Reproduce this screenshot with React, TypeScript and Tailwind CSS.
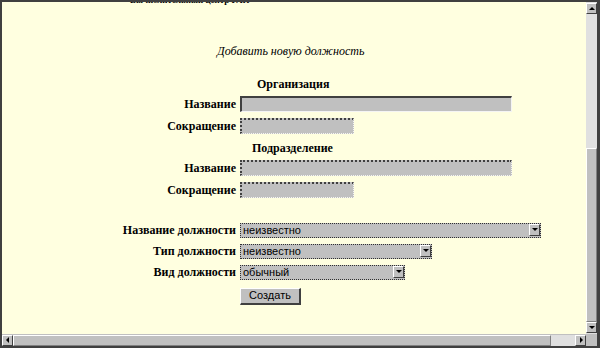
import React from "react";

const serif = { fontFamily: '"Liberation Serif", "Times New Roman", serif' };
const sans = { fontFamily: '"Liberation Sans", Arial, sans-serif' };

const Tri = ({ dir }: { dir: "up" | "down" | "left" | "right" }) => {
  const pts = {
    up: "1,5 4,2 7,5",
    down: "1,2 4,5 7,2",
    left: "5,1 2,4 5,7",
    right: "3,1 6,4 3,7",
  }[dir];
  return (
    <svg width="8" height="8" viewBox="0 0 8 8">
      <polygon points={pts} fill="#000" />
    </svg>
  );
};

const ArrowBtn = ({ dir }: { dir: "up" | "down" | "left" | "right" }) => (
  <div className="w-[11px] h-[11px] bg-[#c0c0c0] border-t border-l border-white border-r border-b border-r-[#404040] border-b-[#404040] flex items-center justify-center shrink-0">
    <Tri dir={dir} />
  </div>
);

const Field = ({ w, solid }: { w: number; solid?: boolean }) => (
  <div
    className={
      "ml-[4px] h-[16px] bg-[#c0c0c0] border-t-2 border-l-2 border-t-[#404040] border-l-[#404040] border-b border-r border-b-[#f4f4f4] border-r-[#f4f4f4] " +
      (solid ? "" : "border-dotted")
    }
    style={{ width: w }}
  />
);

const Select = ({ w, value }: { w: number; value: string }) => (
  <div
    className="ml-[4px] h-[15px] bg-[#c0c0c0] border border-dotted border-[#303030] flex items-center"
    style={{ width: w }}
  >
    <span className="flex-1 pl-[2px] text-[11px] leading-[13px] text-black" style={sans}>
      {value}
    </span>
    <div className="w-[11px] h-[12px] bg-[#c0c0c0] border-t border-l border-white border-r border-b border-r-[#404040] border-b-[#404040] flex items-center justify-center">
      <Tri dir="down" />
    </div>
  </div>
);

const Row = ({ label, children, mt }: { label: string; children: React.ReactNode; mt: string }) => (
  <div className={"flex items-center " + mt}>
    <div className="w-[234px] text-right text-[12px] font-bold leading-[16px] text-black" style={serif}>
      {label}
    </div>
    {children}
  </div>
);

export default function App() {
  return (
    <div className="w-[600px] h-[348px] flex flex-col bg-[#c0c0c0] border-t-2 border-l-2 border-r-[3px] border-b-2 border-[#404040] overflow-hidden">
      <div className="flex flex-1 min-h-0">
        <div className="flex-1 bg-[#ffffe0] overflow-hidden" style={serif}>
          <div className="h-[41px] overflow-hidden">
            <div className="-mt-[10px] pl-[128px] text-[9px] font-bold leading-[16px] text-black">
              Вычислительный центр РАН
            </div>
          </div>
          <div className="h-[16px] pl-[215px] text-[12px] italic leading-[16px] text-black">
            Добавить новую должность
          </div>
          <div className="mt-[17px] h-[16px] pl-[255px] text-[12px] font-bold leading-[16px] text-black">
            Организация
          </div>
          <Row label="Название" mt="mt-[4px]">
            <Field w={272} solid />
          </Row>
          <Row label="Сокращение" mt="mt-[6px]">
            <Field w={114} />
          </Row>
          <div className="mt-[6px] h-[16px] pl-[250px] text-[12px] font-bold leading-[16px] text-black">
            Подразделение
          </div>
          <Row label="Название" mt="mt-[4px]">
            <Field w={272} />
          </Row>
          <Row label="Сокращение" mt="mt-[6px]">
            <Field w={114} />
          </Row>
          <Row label="Название должности" mt="mt-[24px]">
            <Select w={301} value="неизвестно" />
          </Row>
          <Row label="Тип должности" mt="mt-[5px]">
            <Select w={192} value="неизвестно" />
          </Row>
          <Row label="Вид должности" mt="mt-[5px]">
            <Select w={165} value="обычный" />
          </Row>
          <div className="mt-[2px] pl-[238px]">
            <button
              className="w-[61px] h-[17px] bg-[#c0c0c0] border-t border-l border-white border-r-2 border-b-2 border-r-[#404040] border-b-[#404040] text-[11px] leading-[13px] text-black"
              style={sans}
            >
              Создать
            </button>
          </div>
        </div>
        <div className="w-[11px] flex flex-col pt-[1px] bg-[#e0e0e0]">
          <ArrowBtn dir="up" />
          <div className="h-[134px] bg-[#e0e0e0]" />
          <div className="flex-1 bg-[#c0c0c0] border-t border-l border-white border-r border-b border-r-[#808080] border-b-[#808080]" />
          <ArrowBtn dir="down" />
          <div className="h-[1px]" />
        </div>
      </div>
      <div className="h-[12px] flex bg-[#c0c0c0]">
        <div className="flex-1 flex items-center">
          <ArrowBtn dir="left" />
          <div className="flex-1 h-[11px] bg-[#c0c0c0] border-t border-l border-white border-r border-b border-r-[#808080] border-b-[#808080]" />
          <div className="w-[24px] h-[11px] bg-[#e0e0e0]" />
          <ArrowBtn dir="right" />
        </div>
        <div className="w-[11px] bg-[#c0c0c0]" />
      </div>
    </div>
  );
}
